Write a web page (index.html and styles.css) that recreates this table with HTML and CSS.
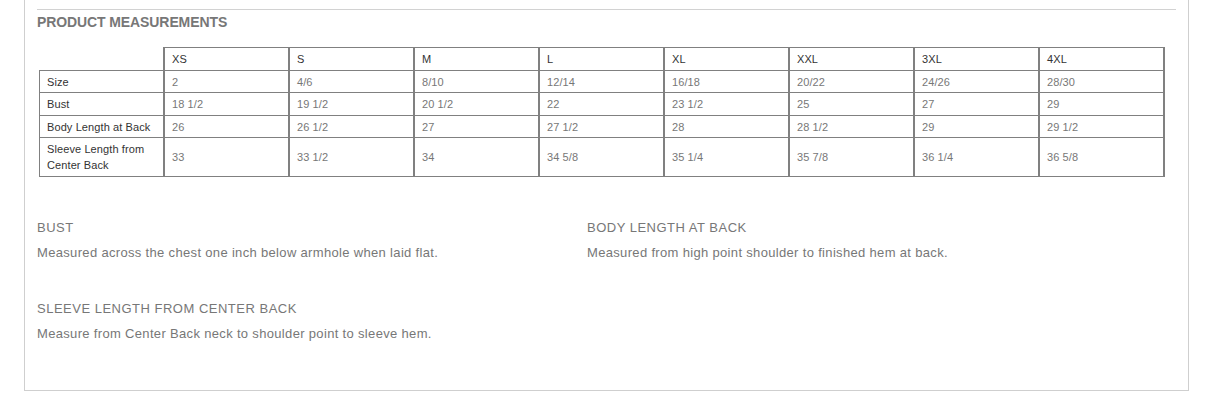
FILE: index.html
```html
<!DOCTYPE html>
<html>
<head>
<meta charset="utf-8">
<link rel="stylesheet" href="styles.css">
</head>
<body>
<div class="panel">
  <div class="rule"></div>
  <h3 class="title">PRODUCT MEASUREMENTS</h3>
  <table class="sizes">
    <tr class="head">
      <td class="blank"></td>
      <td>XS</td><td>S</td><td>M</td><td>L</td><td>XL</td><td>XXL</td><td>3XL</td><td>4XL</td>
    </tr>
    <tr>
      <td class="label">Size</td>
      <td>2</td><td>4/6</td><td>8/10</td><td>12/14</td><td>16/18</td><td>20/22</td><td>24/26</td><td>28/30</td>
    </tr>
    <tr>
      <td class="label">Bust</td>
      <td>18 1/2</td><td>19 1/2</td><td>20 1/2</td><td>22</td><td>23 1/2</td><td>25</td><td>27</td><td>29</td>
    </tr>
    <tr>
      <td class="label">Body Length at Back</td>
      <td>26</td><td>26 1/2</td><td>27</td><td>27 1/2</td><td>28</td><td>28 1/2</td><td>29</td><td>29 1/2</td>
    </tr>
    <tr class="last">
      <td class="label">Sleeve Length from Center Back</td>
      <td>33</td><td>33 1/2</td><td>34</td><td>34 5/8</td><td>35 1/4</td><td>35 7/8</td><td>36 1/4</td><td>36 5/8</td>
    </tr>
  </table>
  <div class="defs">
    <div class="def">
      <h4 class="def-title">BUST</h4>
      <p class="def-text">Measured across the chest one inch below armhole when laid flat.</p>
    </div>
    <div class="def">
      <h4 class="def-title">BODY LENGTH AT BACK</h4>
      <p class="def-text">Measured from high point shoulder to finished hem at back.</p>
    </div>
    <div class="def">
      <h4 class="def-title">SLEEVE LENGTH FROM CENTER BACK</h4>
      <p class="def-text">Measure from Center Back neck to shoulder point to sleeve hem.</p>
    </div>
  </div>
</div>
</body>
</html>
```
FILE: styles.css
```css
html, body {
  margin: 0;
  padding: 0;
  background: #fff;
}

body {
  font-family: "Liberation Sans", Arial, sans-serif;
}

.panel {
  margin: 0 23px 0 24px;
  border: 1px solid #cfcfcf;
  border-top: none;
  padding: 9px 12px 47px 12px;
}

.rule {
  height: 0;
  border-top: 1px solid #d2d2d2;
}

.title {
  margin: 4px 0 17px 0;
  font-size: 14px;
  line-height: 16px;
  font-weight: bold;
  color: #777;
  letter-spacing: -0.1px;
}

.sizes {
  margin-left: 2px;
  table-layout: fixed;
  border-collapse: separate;
  border-spacing: 0;
  font-size: 11px;
  line-height: 16px;
  letter-spacing: 0.1px;
}

.sizes td {
  box-sizing: border-box;
  width: 125px;
  padding: 3px 6px 2.6px 7px;
  border-top: 1px solid #808080;
  border-left: 2px solid #808080;
  color: #777;
  vertical-align: middle;
  text-align: left;
}

.sizes td:last-child {
  width: 127px;
  border-right: 2px solid #808080;
}

.sizes td:first-child {
  width: 124px;
  border-left: 1px solid #808080;
}

.sizes .head td {
  color: #333;
}

.sizes .head td.blank {
  border-top: none;
  border-left: none;
  padding-left: 8px;
}

.sizes td.label {
  color: #333;
}

.sizes .last td {
  border-bottom: 1px solid #808080;
}

.defs {
  margin-top: 42px;
  display: grid;
  grid-template-columns: 550px 550px;
  row-gap: 38px;
}

.def-title {
  margin: 0 0 7px 0;
  font-size: 13px;
  line-height: 18px;
  font-weight: normal;
  color: #777;
  letter-spacing: 0.5px;
}

.def-text {
  margin: 0;
  font-size: 13px;
  line-height: 18px;
  color: #777;
  letter-spacing: 0.33px;
}
```
